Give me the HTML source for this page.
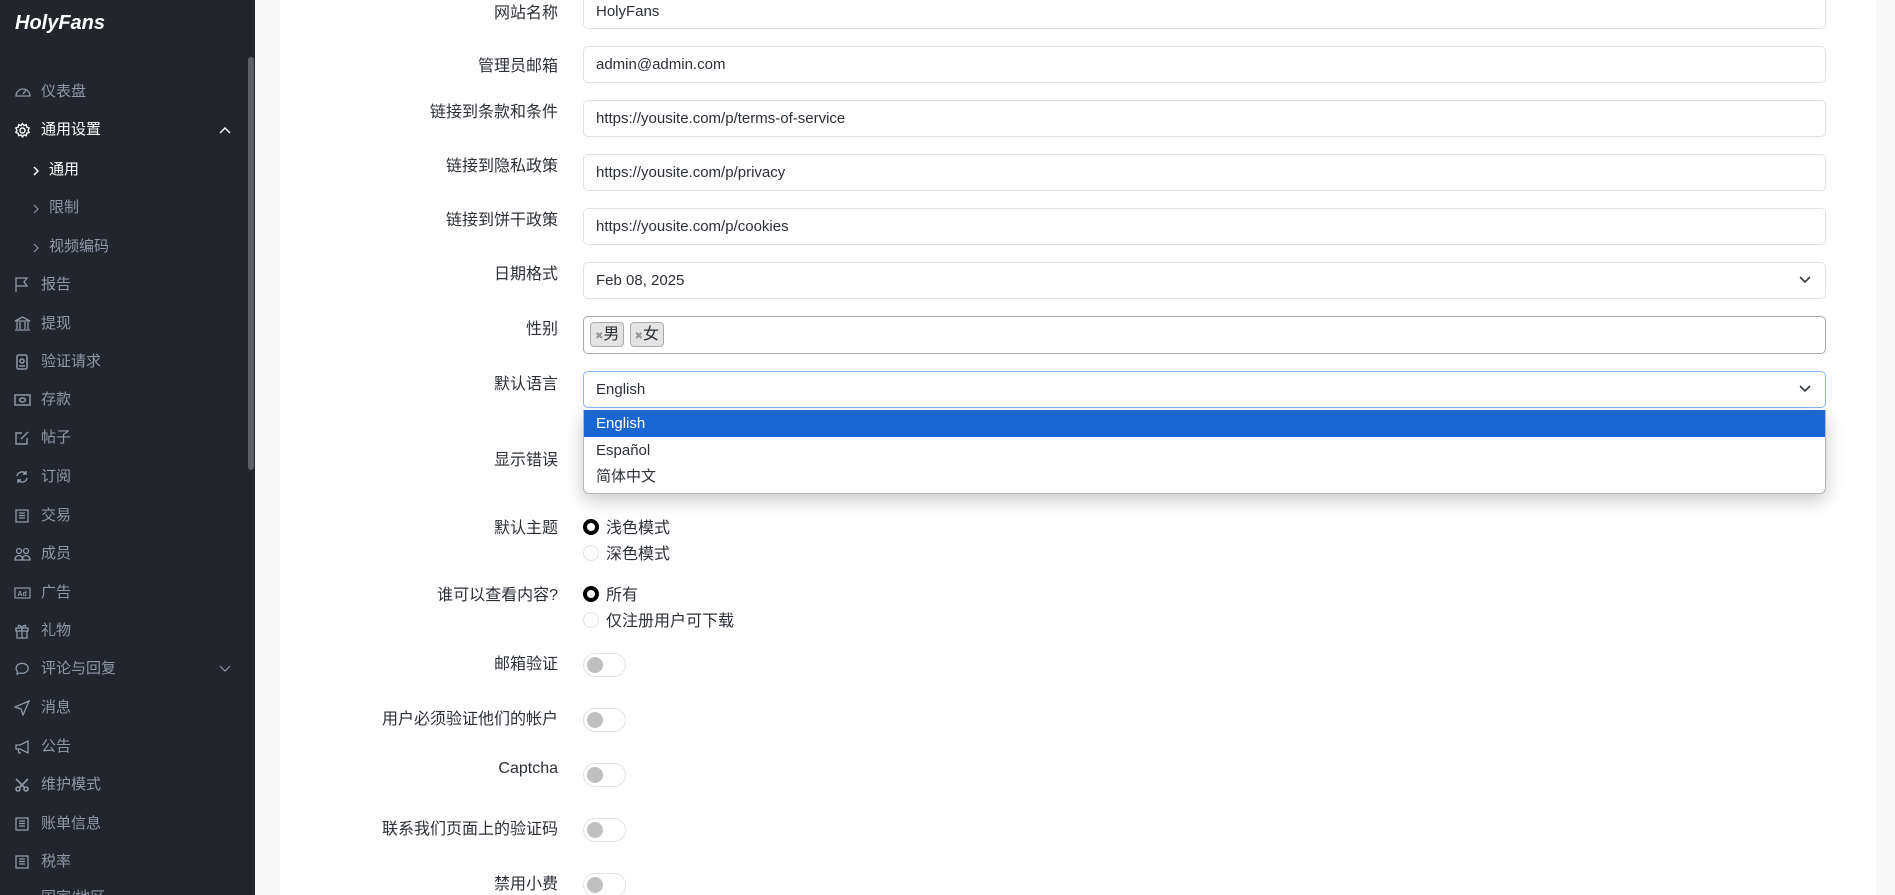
<!DOCTYPE html>
<html style="overflow:hidden;width:1895px;height:895px"><head><meta charset="utf-8"><style>
*{box-sizing:border-box;margin:0;padding:0}
body{width:1895px;height:895px;overflow:hidden;background:#f8f8f9;font-family:"Liberation Sans","Noto Sans CJK SC",sans-serif}
#wrap{position:relative;width:1895px;height:895px;overflow:hidden}
#sb{position:absolute;left:0;top:0;width:255px;height:895px;background:#22252b;overflow:hidden}
#sb .logo{position:absolute;left:15px;top:12px;color:#fff;font-weight:bold;font-style:italic;font-size:20px}
#sb .it{position:absolute;left:0;height:24px;line-height:24px;color:#8f99a8;font-size:15px;width:240px}
#sb .it svg{position:absolute;left:14px;top:4px}
#sb .it .t{position:absolute;left:41px}
#sb .it.sub .t{left:49px}
#sb .w{color:#fff}
#scroll{position:absolute;left:248px;top:57px;width:6px;height:413px;background:#5c5f64;border-radius:3px}
#card{position:absolute;left:280px;top:0;width:1596px;height:895px;background:#fff}
.lb{position:absolute;right:1337px;font-size:16px;color:#2b2f36;text-align:right;white-space:nowrap;margin-top:-3px}
.in{position:absolute;left:583px;width:1243px;height:37px;border:1px solid #dee0e4;border-radius:5px;font-size:15px;color:#2b2f36;padding-left:12px;line-height:35px;background:#fff;white-space:nowrap}
.arr{position:absolute;right:14px;top:13px}
.tg{position:absolute;left:583px;width:43px;height:24px;border:1px solid #e1e3e6;border-radius:12px;background:#fff}
.tg::after{content:"";position:absolute;left:3px;top:3px;width:16px;height:16px;border-radius:50%;background:#bfbfbf}
.rd{position:absolute;left:583px;width:16px;height:16px;border-radius:50%}
.rd.on{border:4px solid #000}
.rd.off{border:1px solid #e3e3e3}
.rt{position:absolute;left:606px;font-size:16px;color:#2b2f36;margin-top:-3px}
</style></head><body><div id="wrap">
<div id="sb">
<div class="logo">HolyFans</div>
<div class="it" style="top:80px"><svg width="18" height="16" viewBox="0 0 18 16" fill="none" stroke="#8f99a8" stroke-width="1.3"><path d="M2 12a7 7 0 1 1 14 0H2z"/><path d="M9 10l3-4"/></svg><span class="t">仪表盘</span></div>
<div class="it w" style="top:118px"><svg width="17" height="17" viewBox="0 0 17 17" fill="none" stroke="#fff" stroke-width="1.4"><circle cx="8.5" cy="8.5" r="2.5"/><path d="M8.5 1.5l1.5 2 2.3-.8.5 2.4 2.3.9-1 2.2 1 2.2-2.3.9-.5 2.4-2.3-.8-1.5 2-1.5-2-2.3.8-.5-2.4-2.3-.9 1-2.2-1-2.2 2.3-.9.5-2.4 2.3.8z"/></svg><span class="t">通用设置</span><svg style="left:219px;top:8px" width="12" height="8" viewBox="0 0 12 8" fill="none" stroke="#fff" stroke-width="1.4"><path d="M1 7l5-5 5 5"/></svg></div>
<div class="it sub w" style="top:158px"><svg style="left:33px;top:8px" width="6" height="10" viewBox="0 0 6 10" fill="none" stroke="#fff" stroke-width="1.5"><path d="M1 1l4 4-4 4"/></svg><span class="t">通用</span></div>
<div class="it sub" style="top:196px"><svg style="left:33px;top:8px" width="6" height="10" viewBox="0 0 6 10" fill="none" stroke="#8f99a8" stroke-width="1.1"><path d="M1 1l4 4-4 4"/></svg><span class="t">限制</span></div>
<div class="it sub" style="top:235px"><svg style="left:33px;top:8px" width="6" height="10" viewBox="0 0 6 10" fill="none" stroke="#8f99a8" stroke-width="1.1"><path d="M1 1l4 4-4 4"/></svg><span class="t">视频编码</span></div>
<div class="it" style="top:273px"><svg width="16" height="16" viewBox="0 0 16 16" fill="none" stroke="#8f99a8" stroke-width="1.3"><path d="M2 15V1h11l-3 4 3 4H2"/></svg><span class="t">报告</span></div>
<div class="it" style="top:312px"><svg width="17" height="16" viewBox="0 0 17 16" fill="none" stroke="#8f99a8" stroke-width="1.3"><path d="M1 5L8.5 1 16 5zM3 6v7M6 6v7M11 6v7M14 6v7M1 14h15"/></svg><span class="t">提现</span></div>
<div class="it" style="top:350px"><svg width="16" height="16" viewBox="0 0 16 16" fill="none" stroke="#8f99a8" stroke-width="1.5"><rect x="3" y="1" width="10" height="14" rx="1.5"/><circle cx="8" cy="7" r="2"/><path d="M5 12h6"/></svg><span class="t">验证请求</span></div>
<div class="it" style="top:388px"><svg width="17" height="16" viewBox="0 0 17 16" fill="none" stroke="#8f99a8" stroke-width="1.5"><rect x="1" y="3" width="15" height="10"/><ellipse cx="8.5" cy="8" rx="3" ry="2"/></svg><span class="t">存款</span></div>
<div class="it" style="top:426px"><svg width="16" height="16" viewBox="0 0 16 16" fill="none" stroke="#8f99a8" stroke-width="1.4"><path d="M13 8v6H2V3h6M7 9l7-7"/></svg><span class="t">帖子</span></div>
<div class="it" style="top:465px"><svg width="16" height="16" viewBox="0 0 16 16" fill="none" stroke="#8f99a8" stroke-width="1.4"><path d="M3 7a5 5 0 0 1 9-2M13 9a5 5 0 0 1-9 2M12 2v3H9M4 14v-3h3"/></svg><span class="t">订阅</span></div>
<div class="it" style="top:504px"><svg width="16" height="16" viewBox="0 0 16 16" fill="none" stroke="#8f99a8" stroke-width="1.3"><rect x="2" y="2" width="12" height="12"/><path d="M5 5h6M5 7.5h6M5 10h6"/></svg><span class="t">交易</span></div>
<div class="it" style="top:542px"><svg width="17" height="16" viewBox="0 0 17 16" fill="none" stroke="#8f99a8" stroke-width="1.3"><circle cx="5" cy="5" r="2.5"/><circle cx="12" cy="5" r="2.5"/><path d="M1 14c0-3 2-4.5 4-4.5s4 1.5 4 4.5zM8 14c0-3 2-4.5 4-4.5s4 1.5 4 4.5z"/></svg><span class="t">成员</span></div>
<div class="it" style="top:581px"><svg width="17" height="16" viewBox="0 0 17 16"><rect x="1" y="3" width="15" height="10" fill="none" stroke="#8f99a8" stroke-width="1.2"/><text x="3.5" y="11" font-size="7" font-family="Liberation Sans" font-weight="bold" fill="#8f99a8">Ad</text></svg><span class="t">广告</span></div>
<div class="it" style="top:619px"><svg width="16" height="16" viewBox="0 0 16 16" fill="none" stroke="#8f99a8" stroke-width="1.3"><rect x="2" y="5" width="12" height="3"/><path d="M3 8v7h10V8M8 5v10M8 5C6 1 3 2 5 4M8 5c2-4 5-3 3-1"/></svg><span class="t">礼物</span></div>
<div class="it" style="top:657px"><svg width="17" height="16" viewBox="0 0 17 16" fill="none" stroke="#8f99a8" stroke-width="1.3"><path d="M3 13l.5-2.5A6 5 0 1 1 6 12z"/></svg><span class="t">评论与回复</span><svg style="left:219px;top:8px" width="12" height="8" viewBox="0 0 12 8" fill="none" stroke="#8f99a8" stroke-width="1.2"><path d="M1 1l5 5 5-5"/></svg></div>
<div class="it" style="top:696px"><svg width="16" height="16" viewBox="0 0 16 16" fill="none" stroke="#8f99a8" stroke-width="1.3"><path d="M15 1L1 7l6 2 2 6z"/></svg><span class="t">消息</span></div>
<div class="it" style="top:735px"><svg width="17" height="16" viewBox="0 0 17 16" fill="none" stroke="#8f99a8" stroke-width="1.3"><path d="M2 6h4l8-4v12l-8-4H2zM4 10l1 4h2"/></svg><span class="t">公告</span></div>
<div class="it" style="top:773px"><svg width="16" height="16" viewBox="0 0 16 16" fill="none" stroke="#8f99a8" stroke-width="1.6"><circle cx="4" cy="12" r="2"/><circle cx="12" cy="12" r="2"/><path d="M5.5 10.5L14 2M10.5 10.5L2 2"/></svg><span class="t">维护模式</span></div>
<div class="it" style="top:812px"><svg width="16" height="16" viewBox="0 0 16 16" fill="none" stroke="#8f99a8" stroke-width="1.3"><rect x="2" y="2" width="12" height="12"/><path d="M5 5h6M5 7.5h6M5 10h6"/></svg><span class="t">账单信息</span></div>
<div class="it" style="top:850px"><svg width="16" height="16" viewBox="0 0 16 16" fill="none" stroke="#8f99a8" stroke-width="1.3"><rect x="2" y="2" width="12" height="12"/><path d="M5 5h6M5 7.5h6M5 10h6"/></svg><span class="t">税率</span></div>
<div class="it" style="top:886px"><span class="t">国家/地区</span></div>
<div id="scroll"></div>
</div>
<div id="card"></div>

<div class="lb" style="top:2px">网站名称</div>
<div class="in" style="top:-8px;padding-top:8px;line-height:22px">HolyFans</div>
<div class="lb" style="top:55px">管理员邮箱</div>
<div class="in" style="top:46px">admin@admin.com</div>
<div class="lb" style="top:101px">链接到条款和条件</div>
<div class="in" style="top:100px">https://yousite.com/p/terms-of-service</div>
<div class="lb" style="top:155px">链接到隐私政策</div>
<div class="in" style="top:154px">https://yousite.com/p/privacy</div>
<div class="lb" style="top:209px">链接到饼干政策</div>
<div class="in" style="top:208px">https://yousite.com/p/cookies</div>
<div class="lb" style="top:263px">日期格式</div>
<div class="in" style="top:262px">Feb 08, 2025<svg class="arr" width="12" height="8" viewBox="0 0 12 8" fill="none" stroke="#343a40" stroke-width="1.6"><path d="M1 1l5 5 5-5"/></svg></div>
<div class="lb" style="top:318px">性别</div>
<div class="in" style="top:316px;height:38px;border-color:#a9a9a9;padding:5px 6px">
<span style="display:inline-block;height:25px;line-height:23px;border:1px solid #aaa;border-radius:4px;background:#e4e4e4;padding:0 4px;font-size:16px;vertical-align:top"><span style="color:#999;font-size:10px">✖</span>男</span>
<span style="display:inline-block;height:25px;line-height:23px;border:1px solid #aaa;border-radius:4px;background:#e4e4e4;padding:0 4px;font-size:16px;vertical-align:top;margin-left:1px"><span style="color:#999;font-size:10px">✖</span>女</span>
</div>
<div class="lb" style="top:373px">默认语言</div>
<div class="in" style="top:371px;border-color:#86b7fe">English<svg class="arr" width="12" height="8" viewBox="0 0 12 8" fill="none" stroke="#343a40" stroke-width="1.6"><path d="M1 1l5 5 5-5"/></svg></div>
<div class="lb" style="top:449px">显示错误</div>
<div class="tg" style="top:448px"></div>
<div style="position:absolute;left:583px;top:410px;width:1243px;height:84px;background:#fff;border:1px solid #b8b8b8;border-top:none;border-radius:0 0 6px 6px;box-shadow:0 6px 18px rgba(0,0,0,.22);font-size:15px;color:#2b2f36">
<div style="height:27px;line-height:27px;background:#1a67d2;color:#fff;padding-left:12px">English</div>
<div style="height:27px;line-height:27px;padding-left:12px">Español</div>
<div style="height:27px;line-height:25px;padding-left:12px">简体中文</div>
</div>
<div class="lb" style="top:517px">默认主题</div>
<div class="rd on" style="top:519px"></div><div class="rt" style="top:517px">浅色模式</div>
<div class="rd off" style="top:545px"></div><div class="rt" style="top:543px">深色模式</div>
<div class="lb" style="top:584px">谁可以查看内容?</div>
<div class="rd on" style="top:586px"></div><div class="rt" style="top:584px">所有</div>
<div class="rd off" style="top:612px"></div><div class="rt" style="top:610px">仅注册用户可下载</div>
<div class="lb" style="top:653px">邮箱验证</div><div class="tg" style="top:653px"></div>
<div class="lb" style="top:708px">用户必须验证他们的帐户</div><div class="tg" style="top:708px"></div>
<div class="lb" style="top:763px">Captcha</div><div class="tg" style="top:763px"></div>
<div class="lb" style="top:818px">联系我们页面上的验证码</div><div class="tg" style="top:818px"></div>
<div class="lb" style="top:873px">禁用小费</div><div class="tg" style="top:873px"></div>
</div></body></html>
